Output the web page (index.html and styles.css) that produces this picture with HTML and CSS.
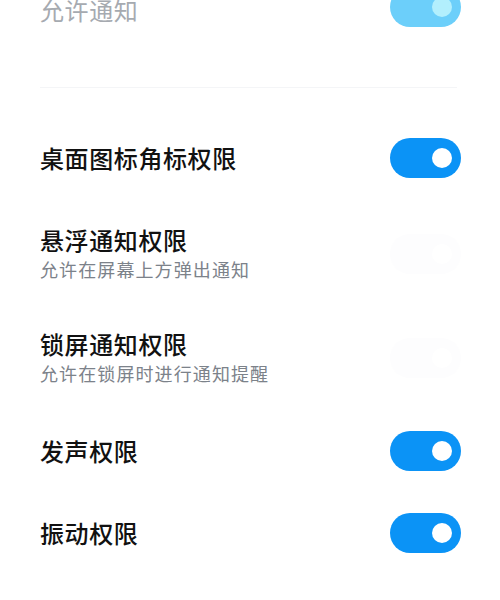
FILE: index.html
```html
<!DOCTYPE html>
<html lang="zh-CN">
<head>
<meta charset="utf-8">
<link rel="stylesheet" href="styles.css">
</head>
<body>
<div class="page">
  <div class="row top">
    <div class="text"><div class="title faded">允许通知</div></div>
    <div class="toggle light"><span class="knob"></span></div>
  </div>
  <div class="divider"></div>
  <div class="row first">
    <div class="text"><div class="title">桌面图标角标权限</div></div>
    <div class="toggle"><span class="knob"></span></div>
  </div>
  <div class="row tall">
    <div class="text">
      <div class="title">悬浮通知权限</div>
      <div class="sub">允许在屏幕上方弹出通知</div>
    </div>
    <div class="toggle ghost"><span class="knob"></span></div>
  </div>
  <div class="row tall">
    <div class="text">
      <div class="title">锁屏通知权限</div>
      <div class="sub">允许在锁屏时进行通知提醒</div>
    </div>
    <div class="toggle ghost"><span class="knob"></span></div>
  </div>
  <div class="row">
    <div class="text"><div class="title">发声权限</div></div>
    <div class="toggle"><span class="knob"></span></div>
  </div>
  <div class="row">
    <div class="text"><div class="title">振动权限</div></div>
    <div class="toggle"><span class="knob"></span></div>
  </div>
</div>
</body>
</html>
```
FILE: styles.css
```css
html, body {
  margin: 0;
  padding: 0;
  background: #ffffff;
  overflow: hidden;
}
body {
  width: 500px;
  height: 600px;
  font-family: "Noto Sans CJK SC", "Noto Sans", sans-serif;
}
.page {
  margin-top: -34px;
  display: flex;
  flex-direction: column;
}
.row {
  height: 82px;
  padding: 0 39px 0 40px;
  display: flex;
  align-items: center;
  justify-content: space-between;
  box-sizing: border-box;
}
.row.first {
  height: 88px;
}
.row.tall {
  height: 104px;
}
.text {
  display: flex;
  flex-direction: column;
}
.title {
  font-size: 24px;
  line-height: 30px;
  font-weight: 500;
  color: #111111;
  letter-spacing: 0.6px;
}
.title.faded {
  color: #a6aab0;
  font-weight: 400;
  position: relative;
  top: 3px;
}
.sub {
  font-size: 18px;
  line-height: 28px;
  color: #7c828a;
  letter-spacing: 1.1px;
}
.divider {
  height: 1px;
  margin: 39px 43px 26px 40px;
  background: #f4f5f7;
}
.toggle {
  width: 71px;
  height: 40px;
  border-radius: 20px;
  background: #0b93f6;
  display: flex;
  align-items: center;
  justify-content: flex-end;
  padding-right: 9px;
  box-sizing: border-box;
  flex: none;
}
.knob {
  width: 20px;
  height: 20px;
  border-radius: 50%;
  background: #ffffff;
}
.toggle.light {
  background: #6ccffa;
}
.toggle.light .knob {
  background: #b2effd;
}
.toggle.ghost {
  background: #fdfdfe;
}
.toggle.ghost .knob {
  background: #ffffff;
}
```
